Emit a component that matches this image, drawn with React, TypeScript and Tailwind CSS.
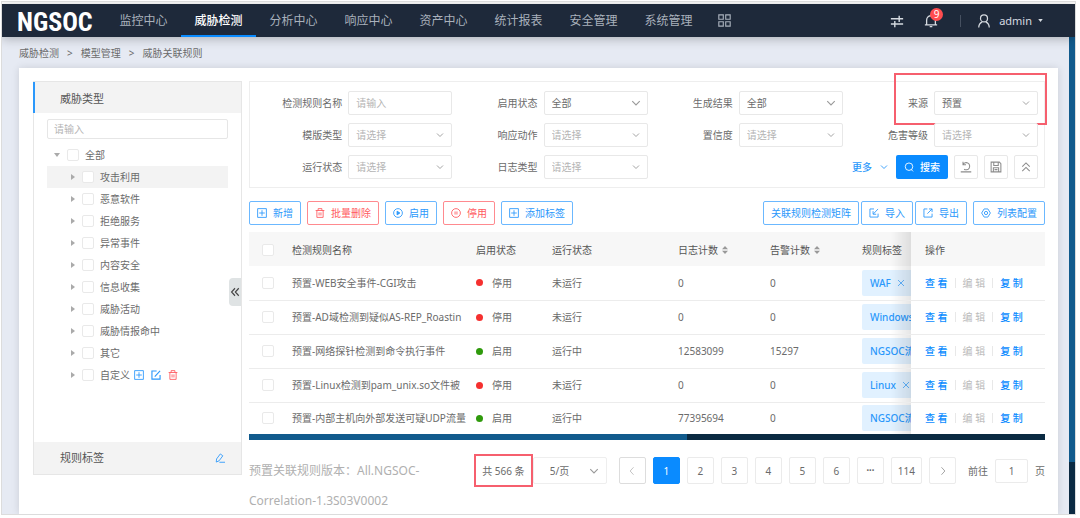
import { useState, type ReactNode } from "react";

type FilterField = { id: string; label: string; value?: string; input?: boolean; highlight?: boolean };
type Rule = { name: string; enabled: boolean; logs: string; alarms: string; tag: string };

const navItems = ["监控中心", "威胁检测", "分析中心", "响应中心", "资产中心", "统计报表", "安全管理", "系统管理"];

const threatTypes = ["攻击利用", "恶意软件", "拒绝服务", "异常事件", "内容安全", "信息收集", "威胁活动", "威胁情报命中", "其它", "自定义"];

const filters: FilterField[] = [
  { id: "name", label: "检测规则名称", input: true },
  { id: "enabled", label: "启用状态", value: "全部" },
  { id: "result", label: "生成结果", value: "全部" },
  { id: "source", label: "来源", value: "预置", highlight: true },
  { id: "template", label: "模版类型" },
  { id: "action", label: "响应动作" },
  { id: "confidence", label: "置信度" },
  { id: "level", label: "危害等级" },
  { id: "running", label: "运行状态" },
  { id: "logtype", label: "日志类型" },
];

const rules: Rule[] = [
  { name: "预置-WEB安全事件-CGI攻击", enabled: false, logs: "0", alarms: "0", tag: "WAF" },
  { name: "预置-AD域检测到疑似AS-REP_Roastin", enabled: false, logs: "0", alarms: "0", tag: "Windows" },
  { name: "预置-网络探针检测到命令执行事件", enabled: true, logs: "12583099", alarms: "15297", tag: "NGSOC流量" },
  { name: "预置-Linux检测到pam_unix.so文件被", enabled: false, logs: "0", alarms: "0", tag: "Linux" },
  { name: "预置-内部主机向外部发送可疑UDP流量", enabled: true, logs: "77395694", alarms: "0", tag: "NGSOC流量" },
];

const pages = ["1", "2", "3", "4", "5", "6", "•••", "114"];

function Icon({ children, className = "size-2.5", box = 16 }: { children: ReactNode; className?: string; box?: number }) {
  return (
    <svg className={`shrink-0 ${className}`} viewBox={`0 0 ${box} ${box}`} fill="none" stroke="currentColor" strokeWidth="1.4" aria-hidden="true">
      {children}
    </svg>
  );
}

const PlusBox = ({ className }: { className?: string }) => (
  <Icon className={className}><path d="M1 1h14v14H1zM8 3.500v9M3.500 8h9" /></Icon>
);
const Trash = ({ className }: { className?: string }) => (
  <Icon className={className}><path d="M1 4h14M5 4V1h6v3M3 4v11h10V4M6.500 7v5M9.500 7v5" /></Icon>
);
const Chevron = ({ className }: { className?: string }) => (
  <Icon className={className}><path d="M2 5l6 6 6-6" strokeWidth="1.8" /></Icon>
);

function OutlineButton({ children, danger }: { children: ReactNode; danger?: boolean }) {
  return (
    <button className={`flex h-6 items-center gap-1.5 rounded-xs border bg-white px-[7px] whitespace-nowrap ${danger ? "border-[#ff8a8f] text-[#ff5a60]" : "border-[#6bb8ff] text-[#2b98fb]"}`}>
      {children}
    </button>
  );
}

function IconButton({ label, children }: { label: string; children: ReactNode }) {
  return (
    <button aria-label={label} className="flex size-6 items-center justify-center rounded-xs border border-[#e8e8e8] text-[#8c8c8c]">
      {children}
    </button>
  );
}

function Checkbox({ label, id }: { label?: string; id?: string }) {
  return <input type="checkbox" id={id} aria-label={label} className="size-3 shrink-0 appearance-none rounded-xs border border-[#e9e9e9] bg-white checked:bg-[#0a8bff]" />;
}

function Header() {
  return (
    <header className="relative z-10 flex h-[33px] shrink-0 items-stretch bg-[#1e293a] pl-[15px] text-[#a9b1bc] shadow-[0_2px_10px_rgba(0,0,0,0.25)]">
      <div className="flex w-[89px] shrink-0 items-center pt-0.5 font-['Roboto_Condensed','Liberation_Sans_Narrow','Roboto',sans-serif] text-[26px] leading-none font-bold text-white">NGSOC</div>
      <nav className="flex">
        {navItems.map(item => (
          <a key={item} href="#" className={`flex w-[75px] items-center justify-center border-b-2 pt-0.5 text-xs ${item === "威胁检测" ? "border-[#0a8bff] font-medium text-white" : "border-transparent"}`}>
            {item}
          </a>
        ))}
      </nav>
      <button aria-label="应用" className="ml-3">
        <Icon className="size-[13px]"><path d="M1 1h5.500v5.500H1zM9.500 1H15v5.500H9.500zM1 9.500h5.500V15H1zM9.500 9.500H15V15H9.500z" /></Icon>
      </button>
      <div className="ml-auto flex items-center pr-8 text-[#d5dae0]">
        <button aria-label="切换">
          <Icon className="size-3.5"><path d="M1 5.500h14M10.500 2v7M1 11.500h14M5.500 8v7" strokeWidth="1.6" /></Icon>
        </button>
        <button aria-label="消息" className="relative ml-5">
          <Icon className="size-3.5"><path d="M1 12.500h14M3 12.500V7a5 5 0 0 1 10 0v5.500M6.500 14.500h3M8 2V.5" strokeWidth="1.5" /></Icon>
          <span className="absolute -top-1.5 left-1.5 flex size-[13px] items-center justify-center rounded-full bg-[#ff4d4f] text-[10px] text-white">9</span>
        </button>
        <span className="ml-5.5 h-3 w-px bg-[#465060]" />
        <button className="ml-4 flex items-center text-[11px]">
          <Icon className="size-3.5"><circle cx="8" cy="5" r="4" /><path d="M2 15.500c0-4 2-5.500 4-6.500M14 15.500c0-4-2-5.500-4-6.500" /></Icon>
          <span className="ml-2">admin</span>
          <svg className="ml-1.5 h-[3px] w-[5px]" viewBox="0 0 6 4" fill="currentColor"><path d="M0 0h6L3 4z" /></svg>
        </button>
      </div>
    </header>
  );
}

function Sidebar() {
  return (
    <aside className="relative flex w-[209px] shrink-0 flex-col self-start border border-[#e6e6e6]">
      <h2 className="-ml-px flex h-[31px] items-center border-l-2 border-[#2b98fb] bg-[#f3f3f3] pt-0.5 pl-[25px] text-[11px] text-[#555]">威胁类型</h2>
      <input aria-label="搜索威胁类型" placeholder="请输入" className="mx-[13px] mt-1.5 h-5 rounded-xs border border-[#e6e6e6] px-1.5 placeholder:text-[#b5b5b5]" />
      <ul className="mx-[13px] mt-[5px]">
        <li className="flex h-[22px] items-center pl-[7px]">
          <svg className="h-1 w-1.5" viewBox="0 0 6 4" fill="#aaa"><path d="M0 0h6L3 4z" /></svg>
          <span className="mr-1.5 ml-[7px] flex"><Checkbox id="type-all" /></span>
          <label htmlFor="type-all">全部</label>
        </li>
        {threatTypes.map((type, i) => (
          <li key={type} className={`flex h-[22px] items-center pl-6 ${i === 0 ? "bg-[#f3f3f3]" : ""}`}>
            <svg className="h-1.5 w-1" viewBox="0 0 4 6" fill="#aaa"><path d="M0 0v6l4-3z" /></svg>
            <span className="mr-1.5 ml-[7px] flex"><Checkbox id={`type-${i}`} /></span>
            <label htmlFor={`type-${i}`}>{type}</label>
            {type === "自定义" && (
              <span className="ml-1 flex gap-[7px]">
                <button aria-label="新增类型" className="text-[#2b98fb]"><PlusBox /></button>
                <button aria-label="编辑类型" className="text-[#2b98fb]"><Icon><path d="M9 1.500H1.500v13h13V8M6 10.500l8.500-9" strokeWidth="1.8" /></Icon></button>
                <button aria-label="删除类型" className="text-[#ff5a60]"><Trash /></button>
              </span>
            )}
          </li>
        ))}
      </ul>
      <div className="mt-14 flex h-8 items-center justify-between bg-[#f3f3f3] pr-4 pl-[26px]">
        <h2 className="text-[11px] text-[#555]">规则标签</h2>
        <button aria-label="编辑标签" className="text-[#2b98fb]">
          <Icon><path d="M2 14.500l.5-5L8.500 1.500l4 3-6 8zM7 14.800h9" /></Icon>
        </button>
      </div>
      <button aria-label="收起" className="absolute top-[196px] right-0 flex h-7 w-3 items-center justify-center rounded-l bg-[#dfe3e4] text-[#444]">
        <Icon><path d="M8 2L2.500 8 8 14M14 2L8.500 8l5.500 6" strokeWidth="1.8" /></Icon>
      </button>
    </aside>
  );
}

function Field({ field }: { field: FilterField }) {
  return (
    <div className="relative flex items-center justify-end gap-1.5">
      <label htmlFor={field.id}>{field.label}</label>
      {field.input ? (
        <input id={field.id} placeholder="请输入" className="h-6 w-[104px] rounded-xs border border-[#e8e8e8] px-[7px] placeholder:text-[#b5b5b5]" />
      ) : (
        <div className="relative w-[104px]">
          <select id={field.id} className={`h-6 w-full appearance-none rounded-xs border border-[#e8e8e8] bg-white px-[7px] ${field.value ? "" : "text-[#b5b5b5]"}`}>
            <option>{field.value ?? "请选择"}</option>
          </select>
          <span className="pointer-events-none absolute inset-y-0 right-1.5 flex w-3 items-center justify-center text-[#999]">
            <Chevron className={field.value === "全部" ? "size-2.5" : "size-2"} />
          </span>
        </div>
      )}
      {field.highlight && <span className="pointer-events-none absolute -top-[18px] -right-[9px] h-[52px] w-[153px] border-2 border-[#f65f6e]" />}
    </div>
  );
}

function Filters() {
  return (
    <form className="grid grid-cols-4 gap-y-2 border border-[#eee] pt-[9px] pr-1.5 pb-2 pl-[7px]" onSubmit={e => e.preventDefault()}>
      {filters.map(field => <Field key={field.id} field={field} />)}
      <div className="col-span-2 flex items-center justify-end gap-1.5">
        <button type="button" className="mr-0.5 flex items-center gap-2 font-medium text-[#2b98fb]">更多<Chevron className="size-2" /></button>
        <button className="flex h-6 items-center gap-1.5 rounded-xs bg-[#0a8bff] px-2 font-medium text-white">
          <Icon><circle cx="8" cy="7.500" r="6" /><path d="M11.500 12l3 3" /></Icon>搜索
        </button>
        <IconButton label="重置"><Icon className="size-3"><path d="M4 4.500a4.800 4.800 0 1 1 1.500 6.500M4 1v4h4M1 14.500h14" /></Icon></IconButton>
        <IconButton label="保存"><Icon className="size-3"><path d="M1.500 1.500h11l2 2v11h-13zM5 2v4h6V2M4.500 14V9h7v5M6 11.500h4" /></Icon></IconButton>
        <IconButton label="收起筛选"><Icon className="size-3"><path d="M3 7.500L8 2.500l5 5M3 13.500l5-5 5 5" /></Icon></IconButton>
      </div>
    </form>
  );
}

function Toolbar() {
  return (
    <div className="mt-[13px] flex gap-1.5">
      <OutlineButton><PlusBox />新增</OutlineButton>
      <OutlineButton danger><Trash />批量删除</OutlineButton>
      <OutlineButton><Icon><circle cx="8" cy="8" r="7" /><path d="M6.500 5v6l4.500-3z" fill="currentColor" /></Icon>启用</OutlineButton>
      <OutlineButton danger><Icon><circle cx="8" cy="8" r="7" /><path d="M6.500 5.500v5M9.500 5.500v5" /></Icon>停用</OutlineButton>
      <OutlineButton><PlusBox />添加标签</OutlineButton>
      <div className="ml-auto flex gap-0.5">
        <OutlineButton>关联规则检测矩阵</OutlineButton>
        <OutlineButton><Icon><path d="M8 1.500H1.500v13h13V9M14.500 1.500L7 9.500M6.500 5v5h5" /></Icon>导入</OutlineButton>
        <OutlineButton><Icon><path d="M7 1.500H1.500v13h13V9M7 9l7.500-7.500M9.500 1.500h5v5" /></Icon>导出</OutlineButton>
      </div>
      <OutlineButton><Icon><path d="M5 1.500h6l4 6.500-4 6.500H5L1 8z" /><circle cx="8" cy="8" r="2.600" /></Icon>列表配置</OutlineButton>
    </div>
  );
}

function SortHeader({ children }: { children: string }) {
  return (
    <button className="flex items-center gap-1">
      {children}
      <svg className="h-2 w-1.5" viewBox="0 0 6 8" fill="#999"><path d="M0 3.300h6L3 0zM0 4.700h6L3 8z" /></svg>
    </button>
  );
}

const stickyCell = "sticky right-0 pl-3.5 before:absolute before:inset-y-0 before:-left-5 before:w-5 before:bg-gradient-to-r before:from-transparent before:to-black/10";

function RuleTable() {
  return (
    <div className="mt-[7px]">
      <div className="overflow-hidden">
        <table className="w-full min-w-[928px] table-fixed text-left">
          <colgroup>
            <col className="w-[43px]" />
            <col className="w-[184px]" />
            <col className="w-[76px]" />
            <col className="w-[126px]" />
            <col className="w-[92px]" />
            <col className="w-[92px]" />
            <col />
            <col className="w-[134px]" />
          </colgroup>
          <thead>
            <tr className="h-[34px] bg-[#f7f7f7] text-[#555] [&>th]:pt-0.5 [&>th]:font-normal">
              <th className="pl-[13px]"><span className="flex"><Checkbox label="全选" /></span></th>
              <th>检测规则名称</th>
              <th>启用状态</th>
              <th>运行状态</th>
              <th><SortHeader>日志计数</SortHeader></th>
              <th><SortHeader>告警计数</SortHeader></th>
              <th>规则标签</th>
              <th className={`bg-[#f7f7f7] ${stickyCell}`}>操作</th>
            </tr>
          </thead>
          <tbody>
            {rules.map(rule => (
              <tr key={rule.name} className="h-[34px] border-b border-[#ececec] last:h-8 last:border-b-0">
                <td className="pl-[13px]"><span className="flex"><Checkbox label={rule.name} /></span></td>
                <td className="whitespace-nowrap">{rule.name}</td>
                <td>
                  <span className="flex items-center gap-[9px]">
                    <span className={`size-[7px] rounded-full ${rule.enabled ? "bg-[#2f9a0c]" : "bg-[#f5302f]"}`} />
                    {rule.enabled ? "启用" : "停用"}
                  </span>
                </td>
                <td>{rule.enabled ? "运行中" : "未运行"}</td>
                <td>{rule.logs}</td>
                <td>{rule.alarms}</td>
                <td>
                  <span className="inline-flex h-[26px] items-center gap-1.5 rounded-xs bg-[#e1f1ff] px-2 align-middle font-medium whitespace-nowrap text-[#2b98fb]">
                    {rule.tag}
                    <button aria-label={`移除${rule.tag}`}><Icon className="size-2"><path d="M2 2l12 12M14 2L2 14" /></Icon></button>
                  </span>
                </td>
                <td className={`bg-white ${stickyCell}`}>
                  <span className="flex items-center gap-[7px] font-medium whitespace-nowrap text-[#0a8bff]">
                    <a href="#">查 看</a>
                    <span className="h-2.5 w-px bg-[#e8e8e8]" />
                    <a href="#" className="font-normal text-[#bbb]">编 辑</a>
                    <span className="h-2.5 w-px bg-[#e8e8e8]" />
                    <a href="#">复 制</a>
                  </span>
                </td>
              </tr>
            ))}
          </tbody>
        </table>
      </div>
      <div className="h-1.5 bg-[#0b2a42]">
        <div className="h-full w-[55%] bg-[#115b8d]" />
      </div>
    </div>
  );
}

function Pagination() {
  const [page, setPage] = useState("1");
  const pageButton = "flex h-[27px] min-w-[27px] items-center justify-center rounded-xs border";
  return (
    <div className="mt-3.5 flex items-start">
      <p className="mt-0.5 w-[190px] text-xs leading-[30px] text-[#b0b0b0]">预置关联规则版本：All.NGSOC-Correlation-1.3S03V0002</p>
      <div className="ml-auto flex shrink-0 items-center">
        <span className="flex h-[33px] w-[59px] items-center justify-center border-2 border-[#f65f6e] whitespace-nowrap">共 566 条</span>
        <div className="relative w-[74px]">
          <select aria-label="每页条数" className="h-[27px] w-full appearance-none rounded-xs border border-[#eee] bg-white px-4">
            <option>5/页</option>
          </select>
          <span className="pointer-events-none absolute inset-y-0 right-1.5 flex w-3 items-center text-[#999]"><Chevron /></span>
        </div>
        <div className="ml-3 flex gap-[7px]">
          <button aria-label="上一页" className={`${pageButton} border-[#ddd] text-[#bbb]`}><Icon><path d="M10.500 2L5 8l5.500 6" /></Icon></button>
          {pages.map(p => (
            <button key={p} onClick={() => setPage(p)} className={`${pageButton} px-1.5 ${p === page ? "border-[#0a8bff] bg-[#0a8bff] text-white" : "border-[#ebebeb]"} ${p === "•••" ? "text-[7px]" : ""}`}>
              {p}
            </button>
          ))}
          <button aria-label="下一页" className={`${pageButton} border-[#ebebeb] text-[#999]`}><Icon><path d="M5.500 2L11 8l-5.500 6" /></Icon></button>
        </div>
        <label htmlFor="goto" className="ml-3 whitespace-nowrap">前往</label>
        <input id="goto" defaultValue="1" className="mx-[7px] h-6 w-[33px] rounded-xs border border-[#ebebeb] text-center" />
        <span>页</span>
      </div>
    </div>
  );
}

export default function App() {
  return (
    <div className="h-screen bg-white pt-px pr-1 pb-[3px] pl-px font-['Noto_Sans','Noto_Sans_CJK_SC',sans-serif] text-[10px] leading-4 text-[#6b6b6b]">
      <div className="flex h-full flex-col overflow-hidden border border-[#dcdcdc] pt-0.5">
        <Header />
        <div className="flex min-h-0 flex-1">
          <div className="flex min-w-0 flex-1 flex-col bg-[#e6eaf3] pr-[11px] pl-[17px]">
            <nav aria-label="面包屑" className="flex h-[31px] shrink-0 items-center gap-2">
              <a href="#">威胁检测</a>
              <span>&gt;</span>
              <a href="#">模型管理</a>
              <span>&gt;</span>
              <span>威胁关联规则</span>
            </nav>
            <main className="flex min-h-0 flex-1 gap-[7px] bg-white pt-[13px] pr-[13px] pl-3.5 shadow-[0_0_8px_rgba(0,0,0,0.12)]">
              <Sidebar />
              <section className="min-w-0 flex-1">
                <Filters />
                <Toolbar />
                <RuleTable />
                <Pagination />
              </section>
            </main>
          </div>
          <div className="w-1.5 bg-[#0b2a42]">
            <div className="h-[89%] bg-[#115b8d]" />
          </div>
        </div>
      </div>
    </div>
  );
}
